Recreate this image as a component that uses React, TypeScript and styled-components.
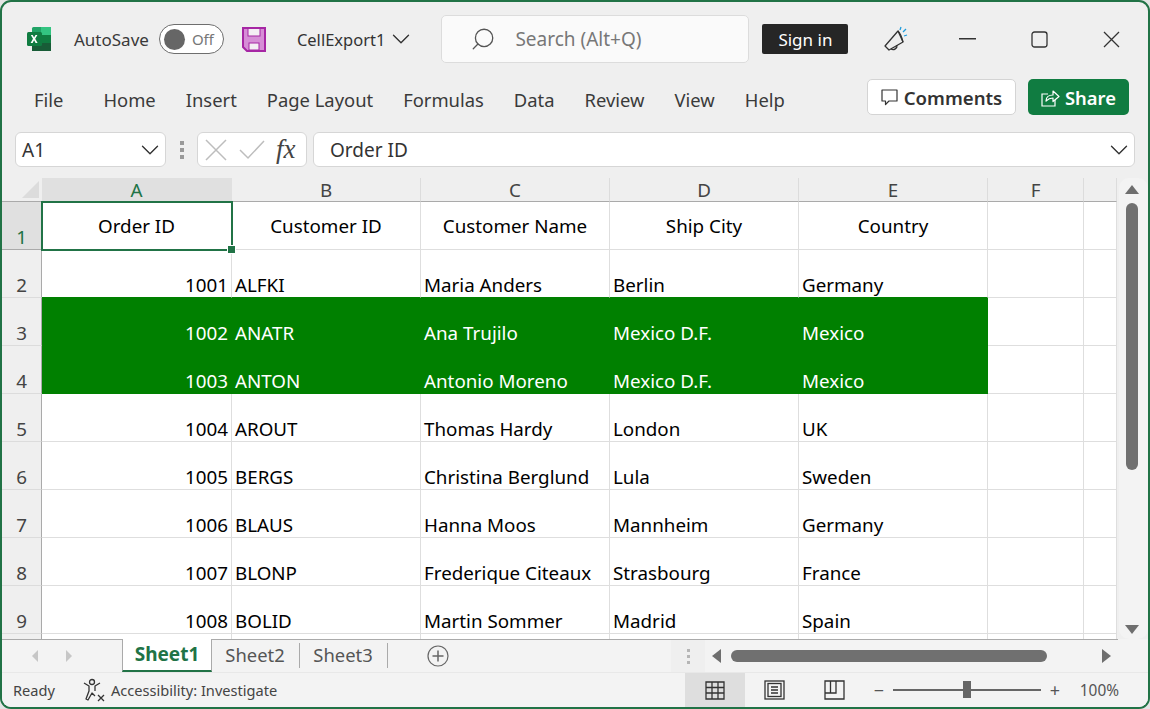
import React from 'react';
import styled, { createGlobalStyle } from 'styled-components';
import { Search, ChevronDown } from 'lucide-react';

const uiFont = '"Noto Sans", "Open Sans", sans-serif';

const GlobalStyle = createGlobalStyle`
  html, body { margin: 0; padding: 0; background: #e4e4e4; }
  * { box-sizing: border-box; }
`;

const Window = styled.div`
  width: 1150px;
  height: 709px;
  display: flex;
  flex-direction: column;
  background: #efefef;
  border: 2px solid #217346;
  border-radius: 11px;
  overflow: hidden;
  font-family: ${uiFont};
  color: #333;
`;

const TitleBar = styled.div`
  height: 74px;
  flex: none;
  display: flex;
  align-items: center;
  padding-left: 25px;
  font-size: 17px;
`;

const AutoSaveLabel = styled.span`
  margin-left: 23px;
  color: #3a3a3a;
`;

const Toggle = styled.div`
  width: 65px;
  height: 30px;
  margin-left: 10px;
  display: flex;
  align-items: center;
  gap: 7px;
  padding-left: 4px;
  background: #fff;
  border: 1px solid #6e6e6e;
  border-radius: 15px;
  font-size: 15px;
  color: #777;
`;

const ToggleKnob = styled.span`
  width: 21px;
  height: 21px;
  flex: none;
  border-radius: 50%;
  background: #666;
`;

const SaveIcon = styled.svg`
  margin-left: 18px;
  flex: none;
`;

const FileName = styled.span`
  margin-left: 31px;
  font-size: 16.5px;
  color: #333;
`;

const FileChevron = styled(ChevronDown)`
  margin-left: 1px;
  color: #333;
`;

const SearchBox = styled.div`
  width: 308px;
  height: 48px;
  margin-left: 25px;
  display: flex;
  align-items: center;
  gap: 19px;
  padding-left: 28px;
  background: #fafafa;
  border: 1px solid #dcdcdc;
  border-radius: 5px;
  color: #777;
  font-size: 19px;
`;

const SignIn = styled.div`
  width: 86px;
  height: 30px;
  margin-left: 13px;
  display: flex;
  align-items: center;
  justify-content: center;
  background: #262626;
  color: #fff;
  border-radius: 2px;
  font-size: 17px;
`;

const WindowButtons = styled.div`
  display: flex;
  align-items: center;
  margin-left: 36px;
`;

const WindowButton = styled.div<{ $gap: number }>`
  display: flex;
  align-items: center;
  justify-content: center;
  margin-right: ${(p) => p.$gap}px;
  color: #333;
`;

const Ribbon = styled.div`
  height: 56px;
  flex: none;
  display: flex;
  align-items: center;
  padding: 0 19px 10px 32px;
  font-size: 18.4px;
`;

const RibbonTabs = styled.div`
  display: flex;
  gap: 30px;
  flex: 1;
  color: #3a3a3a;
`;

const RibbonTab = styled.span<{ $first?: boolean }>`
  margin-right: ${(p) => (p.$first ? 10 : 0)}px;
`;

const CommentsButton = styled.div`
  width: 149px;
  height: 36px;
  margin-top: -4px;
  display: flex;
  align-items: center;
  justify-content: center;
  gap: 6px;
  background: #fff;
  border: 1px solid #d4d4d4;
  border-radius: 5px;
  font-weight: 600;
  font-size: 18.6px;
  color: #333;
`;

const ShareButton = styled.div`
  width: 101px;
  height: 36px;
  margin-top: -4px;
  margin-left: 12px;
  display: flex;
  align-items: center;
  justify-content: center;
  gap: 5px;
  background: #107c41;
  color: #fff;
  border-radius: 5px;
  font-weight: 600;
  font-size: 18.4px;
`;

const FormulaBar = styled.div`
  height: 35px;
  flex: none;
  display: flex;
  align-items: stretch;
  padding-left: 13px;
  padding-right: 13px;
  margin-bottom: 11px;
`;

const RoundBox = styled.div`
  display: flex;
  align-items: center;
  background: #fff;
  border: 1px solid #d6d6d6;
  border-radius: 6px;
  font-size: 19px;
  color: #333;
`;

const NameBox = styled(RoundBox)`
  width: 151px;
  padding: 0 0 0 6px;
  justify-content: space-between;
  flex: none;
`;

const Grip = styled.div`
  width: 31px;
  flex: none;
  display: flex;
  flex-direction: column;
  align-items: center;
  justify-content: center;
  gap: 3px;
`;

const GripDot = styled.span`
  width: 4px;
  height: 4px;
  background: #999;
`;

const FxBox = styled(RoundBox)`
  width: 110px;
  flex: none;
  padding-left: 7px;
  gap: 12px;
`;

const FxText = styled.span`
  font-family: "Liberation Serif", serif;
  font-style: italic;
  font-size: 27px;
  line-height: 1;
  color: #444;
  margin-left: -1px;
`;

const FormulaInput = styled(RoundBox)`
  flex: 1;
  margin-left: 6px;
  padding: 0 0 0 16px;
  justify-content: space-between;
`;

const SheetArea = styled.div`
  height: 461px;
  flex: none;
  display: flex;
`;

const SheetGrid = styled.div`
  width: 1115px;
  flex: none;
  height: 461px;
  overflow: hidden;
  display: grid;
  grid-template-columns: 40px 190px 189px 189px 189px 189px 96px 33px;
  grid-template-rows: 24px repeat(9, 48px) 8px;
  font-size: 18.8px;
  color: #000;
`;

const Corner = styled.div`
  background: #efefef;
  border-bottom: 1px solid #aaa;
  border-right: 1px solid #efefef;
  display: flex;
  align-items: flex-end;
  justify-content: flex-end;
  padding: 0 2px 3px 0;
`;

const ColHead = styled.div<{ $active?: boolean }>`
  display: flex;
  align-items: center;
  justify-content: center;
  padding-top: 1px;
  background: ${(p) => (p.$active ? '#e0e0e0' : '#efefef')};
  color: ${(p) => (p.$active ? '#217346' : '#444')};
  border-bottom: 1px solid #aaa;
  border-right: 1px solid ${(p) => (p.$active ? '#e0e0e0' : '#dcdcdc')};
  font-size: 18.8px;
`;

const RowHead = styled.div<{ $active?: boolean }>`
  display: flex;
  align-items: flex-end;
  justify-content: center;
  line-height: 24px;
  background: ${(p) => (p.$active ? '#e0e0e0' : '#efefef')};
  color: ${(p) => (p.$active ? '#217346' : '#444')};
  border-bottom: 1px solid ${(p) => (p.$active ? '#aaa' : '#dcdcdc')};
  border-right: 1px solid #aaa;
`;

const Cell = styled.div<{ $right?: boolean; $fill?: boolean; $edge?: boolean }>`
  display: flex;
  align-items: flex-end;
  justify-content: ${(p) => (p.$right ? 'flex-end' : 'flex-start')};
  padding: 0 3px 0 3px;
  background: ${(p) => (p.$fill ? '#008000' : '#fff')};
  color: ${(p) => (p.$fill ? '#fff' : '#000')};
  border-right: 1px solid ${(p) => (p.$fill ? '#008000' : '#dedede')};
  border-bottom: 1px solid ${(p) => (p.$fill || p.$edge ? '#008000' : '#dedede')};
  white-space: nowrap;
  line-height: 24px;
`;

const HeaderCell = styled(Cell)`
  align-items: center;
  justify-content: center;
`;

const SelectedCell = styled(HeaderCell)`
  position: relative;
  outline: 2px solid #217346;
  outline-offset: -1px;
`;

const FillHandle = styled.span`
  position: absolute;
  right: -5px;
  bottom: -5px;
  width: 7px;
  height: 7px;
  background: #217346;
  border: 1px solid #fff;
  box-sizing: content-box;
  z-index: 2;
`;

const VScroll = styled.div`
  flex: 1;
  display: flex;
  flex-direction: column;
  align-items: center;
  margin-left: 2px;
  padding: 7px 3px 0 0;
  background: #f3f3f3;
  border-radius: 10px;
`;

const ArrowUp = styled.span`
  width: 0;
  height: 0;
  border-left: 7px solid transparent;
  border-right: 7px solid transparent;
  border-bottom: 9px solid #6e6e6e;
`;

const ArrowDown = styled.span`
  width: 0;
  height: 0;
  margin-top: auto;
  margin-bottom: 5px;
  border-left: 7px solid transparent;
  border-right: 7px solid transparent;
  border-top: 9px solid #6e6e6e;
`;

const VThumb = styled.div`
  width: 12px;
  height: 267px;
  margin-top: 9px;
  background: #707070;
  border-radius: 6px;
`;

const TabBar = styled.div`
  height: 34px;
  flex: none;
  display: flex;
  align-items: stretch;
  background: #f3f3f3;
  border-bottom: 1px solid #e8e8e8;
`;

const TabNav = styled.div`
  width: 120px;
  flex: none;
  display: flex;
  align-items: center;
  gap: 28px;
  padding-left: 30px;
  border-top: 1px solid #aaa;
`;

const NavArrow = styled.span<{ $dir: 'left' | 'right' }>`
  width: 0;
  height: 0;
  border-top: 6px solid transparent;
  border-bottom: 6px solid transparent;
  ${(p) => (p.$dir === 'left' ? 'border-right: 6px solid #c6c6c6;' : 'border-left: 6px solid #c6c6c6;')}
`;

const ActiveTab = styled.div`
  width: 90px;
  flex: none;
  display: flex;
  align-items: center;
  justify-content: center;
  padding-bottom: 2px;
  background: #fff;
  border-left: 1px solid #aaa;
  border-right: 1px solid #aaa;
  border-bottom: 2px solid #217346;
  color: #217346;
  font-weight: 700;
  font-size: 19px;
`;

const SheetTab = styled.div`
  width: 88px;
  flex: none;
  display: flex;
  align-items: center;
  justify-content: center;
  padding: 0 2px 4px 0;
  border-top: 1px solid #aaa;
  color: #555;
  font-size: 18.4px;
  position: relative;
`;

const TabSeparator = styled.span`
  position: absolute;
  right: 0;
  top: 3px;
  bottom: 4px;
  width: 1px;
  background: #aaa;
`;

const TabFill = styled.div`
  flex: 1;
  display: flex;
  align-items: center;
  border-top: 1px solid #aaa;
  padding-left: 39px;
`;

const SplitGrip = styled.div`
  width: 34px;
  margin-left: auto;
  height: 100%;
  flex: none;
  display: flex;
  flex-direction: column;
  align-items: center;
  justify-content: center;
  gap: 3px;
  background: #efefef;
`;

const SmallGripDot = styled.span`
  width: 3px;
  height: 3px;
  background: #b5b5b5;
`;

const HScroll = styled.div`
  width: 413px;
  flex: none;
  height: 100%;
  display: flex;
  align-items: center;
  border-top: 1px solid #aaa;
  margin-right: 30px;
  padding: 0 7px 0 7px;
`;

const HThumb = styled.div`
  width: 316px;
  height: 12px;
  margin: 0 auto 0 10px;
  background: #707070;
  border-radius: 6px;
`;

const HArrow = styled.span<{ $dir: 'left' | 'right' }>`
  width: 0;
  height: 0;
  border-top: 7px solid transparent;
  border-bottom: 7px solid transparent;
  ${(p) => (p.$dir === 'left' ? 'border-right: 9px solid #6e6e6e;' : 'border-left: 9px solid #6e6e6e;')}
`;

const StatusBar = styled.div`
  flex: 1;
  display: flex;
  align-items: center;
  padding-left: 11px;
  background: #f3f3f3;
  font-size: 14.6px;
  color: #444;
`;

const A11yIcon = styled.svg`
  margin-left: 28px;
  margin-right: 6px;
`;

const StatusRight = styled.div`
  margin-left: auto;
  height: 100%;
  display: flex;
  align-items: center;
`;

const ViewButton = styled.div<{ $active?: boolean }>`
  width: 60px;
  height: 100%;
  display: flex;
  align-items: center;
  justify-content: center;
  background: ${(p) => (p.$active ? '#dedede' : 'transparent')};
`;

const ZoomSign = styled.span<{ $lead?: boolean }>`
  width: 12px;
  flex: none;
  margin-left: ${(p) => (p.$lead ? 8 : 0)}px;
  font-size: 18px;
  line-height: 1;
  color: #555;
  text-align: center;
`;

const ZoomTrack = styled.div`
  width: 148px;
  height: 2px;
  margin: 0 8px;
  background: #666;
  position: relative;
`;

const ZoomThumb = styled.span`
  position: absolute;
  left: 70px;
  top: -8px;
  width: 8px;
  height: 17px;
  background: #666;
`;

const ZoomValue = styled.span`
  margin-left: 19px;
  margin-right: 29px;
  font-size: 15.4px;
  color: #555;
`;

const rows = [
  ['1001', 'ALFKI', 'Maria Anders', 'Berlin', 'Germany'],
  ['1002', 'ANATR', 'Ana Trujilo', 'Mexico D.F.', 'Mexico'],
  ['1003', 'ANTON', 'Antonio Moreno', 'Mexico D.F.', 'Mexico'],
  ['1004', 'AROUT', 'Thomas Hardy', 'London', 'UK'],
  ['1005', 'BERGS', 'Christina Berglund', 'Lula', 'Sweden'],
  ['1006', 'BLAUS', 'Hanna Moos', 'Mannheim', 'Germany'],
  ['1007', 'BLONP', 'Frederique Citeaux', 'Strasbourg', 'France'],
  ['1008', 'BOLID', 'Martin Sommer', 'Madrid', 'Spain'],
];

const columns = ['A', 'B', 'C', 'D', 'E', 'F', ''];
const tabs = ['File', 'Home', 'Insert', 'Page Layout', 'Formulas', 'Data', 'Review', 'View', 'Help'];

const ExcelLogo = () => (
  <svg width="24" height="24" viewBox="0 0 24 24">
    <rect x="5" y="0" width="19" height="24" rx="1.5" fill="#21a366" />
    <rect x="14" y="0" width="10" height="8" fill="#33c481" />
    <rect x="14" y="8" width="10" height="8" fill="#107c41" />
    <rect x="5" y="16" width="19" height="8" fill="#185c37" />
    <rect x="0" y="5" width="15" height="14" rx="1.5" fill="#107c41" />
    <path d="M3.800 8l2.200 3.800L3.600 16h2l1.500-2.800L8.600 16h2L8.200 11.800 10.400 8h-1.900L7.100 10.500 5.700 8z" fill="#fff" />
  </svg>
);

const App: React.FC = () => {
  return (
    <Window>
      <GlobalStyle />
      <TitleBar>
        <ExcelLogo />
        <AutoSaveLabel>AutoSave</AutoSaveLabel>
        <Toggle>
          <ToggleKnob />
          Off
        </Toggle>
        <SaveIcon width="24" height="25" viewBox="0 0 24 25">
          <path d="M1 1h22v23H5l-4-4z" fill="#d68ed6" stroke="#a626a4" strokeWidth="2" />
          <rect x="6" y="1.500" width="12" height="7.500" fill="#f4eef4" stroke="#a626a4" />
          <rect x="7" y="16" width="10" height="7" fill="#f4eef4" stroke="#a626a4" />
        </SaveIcon>
        <FileName>CellExport1</FileName>
        <FileChevron size={30} strokeWidth={1.1} />
        <SearchBox>
          <Search size={26} strokeWidth={1.2} style={{ transform: 'scaleX(-1)' }} color="#555" />
          Search (Alt+Q)
        </SearchBox>
        <SignIn>Sign in</SignIn>
        <WindowButtons>
          <WindowButton $gap={51}>
            <svg width="24" height="26" viewBox="0 0 24 26" fill="none" stroke="#333" strokeWidth="1.300">
              <path d="M14 5L1 20l4 4 14-8z" strokeLinejoin="round" />
              <path d="M14 5c2 2 4 7 5 11" />
              <path d="M7 23a4 4 0 0 0 6-4" />
              <path d="M16 4l1-3M19 6l3-3M20 10l3-1" stroke="#1f9cdc" />
            </svg>
          </WindowButton>
          <WindowButton $gap={55}>
            <svg width="17" height="2" viewBox="0 0 17 2">
              <rect width="17" height="1.500" fill="#333" />
            </svg>
          </WindowButton>
          <WindowButton $gap={55}>
            <svg width="17" height="17" viewBox="0 0 17 17" fill="none" stroke="#333" strokeWidth="1.300">
              <rect x="1" y="1" width="15" height="15" rx="2.500" />
            </svg>
          </WindowButton>
          <WindowButton $gap={0}>
            <svg width="17" height="17" viewBox="0 0 17 17" fill="none" stroke="#333" strokeWidth="1.300">
              <path d="M1 1l15 15M16 1L1 16" />
            </svg>
          </WindowButton>
        </WindowButtons>
      </TitleBar>

      <Ribbon>
        <RibbonTabs>
          {tabs.map((t, i) => (
            <RibbonTab key={t} $first={i === 0}>
              {t}
            </RibbonTab>
          ))}
        </RibbonTabs>
        <CommentsButton>
          <svg width="17" height="18" viewBox="0 0 17 18" fill="none" stroke="#333" strokeWidth="1.200">
            <path d="M1 2h15v11H8l-3.500 3.500V13H1z" strokeLinejoin="round" />
          </svg>
          Comments
        </CommentsButton>
        <ShareButton>
          <svg width="19" height="19" viewBox="0 0 19 19" fill="none" stroke="#fff" strokeWidth="1.200">
            <path d="M7 6H1v12h13v-6" />
            <path d="M5 13c0-4 3-6 7-6V3l6 5.500-6 5v-3.500c-3 0-5 1-7 3z" strokeLinejoin="round" />
          </svg>
          Share
        </ShareButton>
      </Ribbon>

      <FormulaBar>
        <NameBox>
          A1
          <ChevronDown size={30} strokeWidth={1.1} color="#333" />
        </NameBox>
        <Grip>
          <GripDot />
          <GripDot />
          <GripDot />
        </Grip>
        <FxBox>
          <svg width="22" height="22" viewBox="0 0 22 22" fill="none" stroke="#bdbdbd" strokeWidth="1.500">
            <path d="M1 1l20 20M21 1L1 21" />
          </svg>
          <svg width="26" height="20" viewBox="0 0 26 20" fill="none" stroke="#bdbdbd" strokeWidth="1.500">
            <path d="M1 10l8 8L25 1" />
          </svg>
          <FxText>fx</FxText>
        </FxBox>
        <FormulaInput>
          Order ID
          <ChevronDown size={30} strokeWidth={1.1} color="#333" />
        </FormulaInput>
      </FormulaBar>

      <SheetArea>
        <SheetGrid>
          <Corner>
            <svg width="17" height="17" viewBox="0 0 17 17">
              <path d="M17 0v17H0z" fill="#dcdcdc" />
            </svg>
          </Corner>
          {columns.map((c, i) => (
            <ColHead key={i} $active={i === 0}>
              {c}
            </ColHead>
          ))}

          <RowHead $active>1</RowHead>
          <SelectedCell>
            Order ID
            <FillHandle />
          </SelectedCell>
          <HeaderCell>Customer ID</HeaderCell>
          <HeaderCell>Customer Name</HeaderCell>
          <HeaderCell>Ship City</HeaderCell>
          <HeaderCell>Country</HeaderCell>
          <Cell />
          <Cell />

          {rows.map((row, r) => {
            const fill = r === 1 || r === 2;
            return (
              <React.Fragment key={row[0]}>
                <RowHead>{r + 2}</RowHead>
                {row.map((v, c) => (
                  <Cell key={c} $right={c === 0} $fill={fill} $edge={r === 0}>
                    {v}
                  </Cell>
                ))}
                <Cell />
                <Cell />
              </React.Fragment>
            );
          })}

          <RowHead />
          {columns.map((c, i) => (
            <Cell key={i} />
          ))}
        </SheetGrid>
        <VScroll>
          <ArrowUp />
          <VThumb />
          <ArrowDown />
        </VScroll>
      </SheetArea>

      <TabBar>
        <TabNav>
          <NavArrow $dir="left" />
          <NavArrow $dir="right" />
        </TabNav>
        <ActiveTab>Sheet1</ActiveTab>
        <SheetTab>
          Sheet2
          <TabSeparator />
        </SheetTab>
        <SheetTab>
          Sheet3
          <TabSeparator />
        </SheetTab>
        <TabFill>
          <svg width="22" height="22" viewBox="0 0 22 22" fill="none" stroke="#666" strokeWidth="1.200">
            <circle cx="11" cy="11" r="10" />
            <path d="M11 5.500v11M5.500 11h11" strokeWidth="1.500" />
          </svg>
          <SplitGrip>
            <SmallGripDot />
            <SmallGripDot />
            <SmallGripDot />
          </SplitGrip>
        </TabFill>
        <HScroll>
          <HArrow $dir="left" />
          <HThumb />
          <HArrow $dir="right" />
        </HScroll>
      </TabBar>

      <StatusBar>
        Ready
        <A11yIcon width="22" height="24" viewBox="0 0 22 24" fill="none" stroke="#333" strokeWidth="1.300">
          <circle cx="9" cy="4" r="2.500" />
          <path d="M1 5l5 3v5l-3 8 2 1 4-7 3 3M17 5l-5 3v5" strokeLinejoin="round" />
          <path d="M15 17l6 6M21 17l-6 6" />
        </A11yIcon>
        Accessibility: Investigate
        <StatusRight>
          <ViewButton $active>
            <svg width="20" height="19" viewBox="0 0 20 19" fill="none" stroke="#333" strokeWidth="1.300">
              <path d="M1 1h18v17H1zM7 1v17M13 1v17M1 6.500h18M1 12h18" />
            </svg>
          </ViewButton>
          <ViewButton>
            <svg width="21" height="20" viewBox="0 0 21 20" fill="none" stroke="#333" strokeWidth="1.300">
              <rect x="1" y="1" width="19" height="18" />
              <rect x="4" y="3.500" width="13" height="13" />
              <path d="M7 7h7M7 10h7M7 13h7" />
            </svg>
          </ViewButton>
          <ViewButton>
            <svg width="21" height="20" viewBox="0 0 21 20" fill="none" stroke="#333" strokeWidth="1.300">
              <path d="M1 1h19v18H1zM1 13h11V1M6.500 1v12" />
            </svg>
          </ViewButton>
          <ZoomSign $lead>−</ZoomSign>
          <ZoomTrack>
            <ZoomThumb />
          </ZoomTrack>
          <ZoomSign>+</ZoomSign>
          <ZoomValue>100%</ZoomValue>
        </StatusRight>
      </StatusBar>
    </Window>
  );
};

export default App;
